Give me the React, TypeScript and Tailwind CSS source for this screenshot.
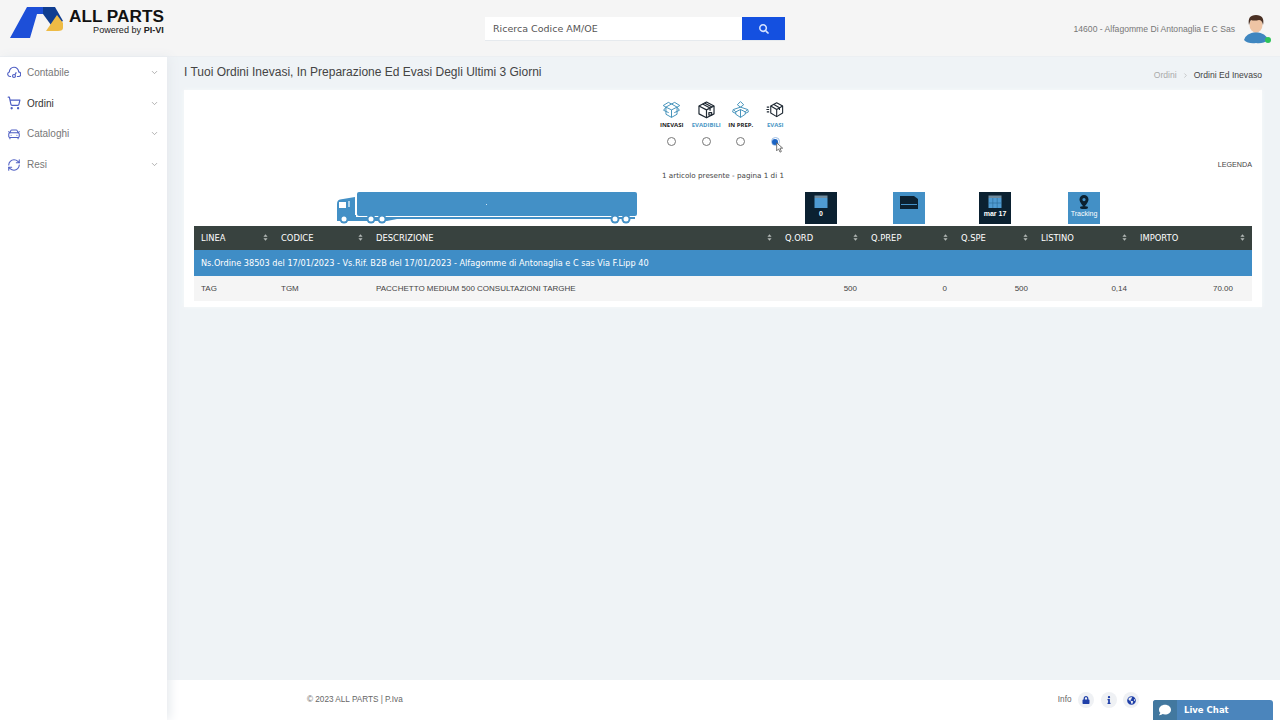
import { ChevronDown, ShoppingCart, CarFront, RefreshCw, ChevronRight } from "lucide-react";
import { FaComment, FaGlobeAmericas, FaInfo, FaLock, FaSearch } from "react-icons/fa";

const sideItems = [
    { label: "Contabile", icon: "gauge" },
    { label: "Ordini", icon: "cart", active: true },
    { label: "Cataloghi", icon: "car" },
    { label: "Resi", icon: "sync" },
];

const columns = [
    { label: "LINEA", width: "w-[81px]", pad: "pl-[7px]" },
    { label: "CODICE", width: "w-[95px]", pad: "pl-[6px]" },
    { label: "DESCRIZIONE", width: "w-[409px]", pad: "pl-[6px]" },
    { label: "Q.ORD", width: "w-[86px]", pad: "pl-[6px]" },
    { label: "Q.PREP", width: "w-[90px]", pad: "pl-[6px]" },
    { label: "Q.SPE", width: "w-[80px]", pad: "pl-[6px]" },
    { label: "LISTINO", width: "w-[99px]", pad: "pl-[6px]" },
    { label: "IMPORTO", width: "w-[118px]", pad: "pl-[6px]" },
];

function SideIcon({ name }: { name: string }) {
    const cls = "w-[14px] h-[14px] text-[#4f5fc4]";
    if (name === "cart") return <ShoppingCart className={cls} strokeWidth={2} />;
    if (name === "car") return <CarFront className={cls} strokeWidth={1.8} />;
    if (name === "sync") return <RefreshCw className={cls} strokeWidth={1.8} />;
    return (
        <svg viewBox="0 0 24 24" className={cls} fill="none" stroke="currentColor" strokeWidth="2">
            <path d="M7 18H5a4 4 0 0 1-1-7.800A8 8 0 0 1 20 10a4 4 0 0 1-1 8h-2" />
            <circle cx="12" cy="17" r="2.500" />
            <path d="M13.500 15 16 11" />
        </svg>
    );
}

function Logo() {
    return (
        <svg viewBox="0 0 54 32" className="w-[54px] h-[32px] shrink-0">
            <path d="M0 32 17 1H36L33 8H27L20 32Z" fill="#1d4fd8" />
            <path d="M33 1H45L53 15 46 19H41L33 8Z" fill="#0f3d91" />
            <path d="M36 25 47 9 53 17V22Q53 25 48 25Z" fill="#eebb45" />
        </svg>
    );
}

function Avatar() {
    return (
        <div className="relative w-[26px] h-[30px]">
            <svg viewBox="0 0 26 30" className="w-[26px] h-[30px]">
                <path d="M1 26 Q3 19 13 18 Q23 19 25 26 Q20 30 13 29 Q5 30 1 26 Z" fill="#3f86c0" />
                <ellipse cx="13" cy="11" rx="6.500" ry="7.500" fill="#eec4a4" />
                <path d="M6 11 Q4 1 13 1 Q22 1 20 11 Q19 6 16 6 Q11 7 8 6 Q7 7 6 11 Z" fill="#4a3023" />
            </svg>
            <span className="absolute right-[-2px] bottom-[1px] w-[6px] h-[6px] rounded-full bg-[#2fc25b]" />
        </div>
    );
}

function OpenBox() {
    return (
        <svg viewBox="0 0 24 24" className="w-[19px] h-[19px]" fill="none" stroke="#3f8fb8" strokeWidth="1.200" strokeLinejoin="round">
            <path d="M5 9 12 5l7 4v9l-7 4-7-4Z" />
            <path d="M5 9l7 3.500L19 9M12 12.500V22" />
            <path d="M5 9 1.500 7 8 3l4 2 4-2 6.500 4L19 9M5 9l-3 4 6.500 3M19 9l3 4-6.500 3" />
        </svg>
    );
}

function CrateBox() {
    return (
        <svg viewBox="0 0 24 24" className="w-[19px] h-[19px]" fill="none" stroke="#1f2933" strokeWidth="1.500" strokeLinejoin="round">
            <path d="M2.500 7.500 12 2.500l9.500 5v10L12 22.500l-9.500-5Z" />
            <path d="M2.500 7.500 12 12.500l9.500-5M12 12.500v10M7 5l9.500 5v3.500M9.500 3.800 19 8.800" />
            <path d="M15 16h3.500v3H15Z" />
        </svg>
    );
}

function PrepBox() {
    return (
        <svg viewBox="0 0 24 24" className="w-[19px] h-[19px]" fill="none" stroke="#3f8fb8" strokeWidth="1.200" strokeLinejoin="round">
            <path d="M12 2 8 6l4 3 4-3Z" />
            <path d="M12 9 3 12l3 3 6-3 6 3 3-3Z" />
            <path d="M6 15v3l6 4 6-4v-3M12 12v10M3 12l-1 3 4 2M21 12l1 3-4 2" />
        </svg>
    );
}

function ShipBox() {
    return (
        <svg viewBox="0 0 24 24" className="w-[19px] h-[19px]" fill="none" stroke="#1f2933" strokeWidth="1.400" strokeLinejoin="round">
            <path d="M6 7.500 13.500 3.500 21 7.500v9l-7.500 4.500L6 16.500Z" />
            <path d="M6 7.500l7.500 4.500L21 7.500M13.500 12v9M9.500 5.500 17 9.700v3" />
            <path d="M1 9h3M0.500 12h3.500M1 15h3" />
        </svg>
    );
}

function Truck() {
    return (
        <svg viewBox="0 0 301 32" className="w-[301px] h-[32px]">
            <rect x="20" y="0" width="280" height="24" rx="2" fill="#4390c6" />
            <rect x="149" y="12" width="1" height="1" fill="#cfe4f3" />
            <path d="M0 29V12Q0 8 3 7.500L18 5V23H19V25H36V29Z" fill="#4390c6" />
            <rect x="2" y="10" width="7" height="6" fill="#fff" />
            <rect x="11" y="9" width="2" height="6" fill="#a9d0ea" />
            <path d="M20 25H298V27H60L50 29H20Z" fill="#4390c6" />
            {[7, 34, 45, 278, 289].map((cx) => (
                <g key={cx}>
                    <circle cx={cx} cy="27" r="4.500" fill="#4390c6" />
                    <circle cx={cx} cy="27" r="2.500" fill="#fff" />
                </g>
            ))}
        </svg>
    );
}

function CalendarGlyph({ grid }: { grid?: boolean }) {
    return (
        <svg viewBox="0 0 16 14" className="w-[16px] h-[14px]">
            <rect x="1.500" y="3" width="13" height="10" fill="#4f9bd2" />
            <rect x="1.500" y="0.500" width="13" height="2.500" fill="#6f8a9c" />
            {grid && <path d="M5.800 3v10M10.200 3v10M1.500 8h13" stroke="#2a6a96" strokeWidth="0.600" />}
        </svg>
    );
}

function StatusBox({ dark, children, caption, bold = true }: { dark?: boolean; children?: React.ReactNode; caption?: string; bold?: boolean }) {
    return (
        <div className={`w-[32px] h-[32px] flex flex-col items-center pt-[3px] ${dark ? "bg-[#0b2131]" : "bg-[#4390c6]"}`}>
            {children}
            {caption && <span className={`text-[7px] leading-[9px] text-white whitespace-nowrap ${bold ? "font-bold" : ""}`}>{caption}</span>}
        </div>
    );
}

function SortIcon() {
    return (
        <svg viewBox="0 0 6 8" className="ml-auto w-[5px] h-[7px]">
            <path d="M3 0 5.500 3H.5ZM3 8 .5 5h5Z" fill="#b4bab8" />
        </svg>
    );
}

export default function App() {
    const steps = [
        { label: "INEVASI", icon: <OpenBox />, color: "text-[#222]" },
        { label: "EVADIBILI", icon: <CrateBox />, color: "text-[#4b97c5]" },
        { label: "IN PREP.", icon: <PrepBox />, color: "text-[#222]" },
        { label: "EVASI", icon: <ShipBox />, color: "text-[#4b97c5]", checked: true },
    ];

    return (
        <div className="relative w-[1280px] h-[720px] overflow-hidden flex flex-col bg-[#eff3f6] font-['Liberation_Sans',Arial,sans-serif] text-[#555]">
            <header className="h-[57px] shrink-0 flex items-center bg-[#f5f5f5] border-b border-[#eceff2]">
                <div className="w-[167px] shrink-0 self-start mt-[6px] flex pl-[10px] gap-[5px]">
                    <Logo />
                    <div className="flex flex-col items-end mt-[1px]">
                        <span className="text-[17.200px] leading-[19px] font-bold text-[#111] whitespace-nowrap">ALL PARTS</span>
                        <span className="text-[9.100px] leading-[11px] mt-[-1px] text-[#222] whitespace-nowrap">Powered by <b>PI-VI</b></span>
                    </div>
                </div>
                <div className="ml-[318px] flex w-[300px] h-[24px] mt-[2px] border-b border-[#e6eaee]">
                    <div className="flex-1 bg-white flex items-center pl-[8px] pt-[2px] text-[9.500px] text-[#555] font-['DejaVu_Sans',sans-serif]">Ricerca Codice AM/OE</div>
                    <div className="w-[43px] bg-[#1450e0] flex items-center justify-center">
                        <FaSearch className="w-[10px] h-[10px] text-[#d5e2ff]" />
                    </div>
                </div>
                <div className="ml-auto mr-[11px] mt-[2px] flex items-center gap-[8px]">
                    <span className="mt-[1px] text-[8.600px] text-[#777]">14600 - Alfagomme Di Antonaglia E C Sas</span>
                    <Avatar />
                </div>
            </header>

            <div className="flex-1 flex min-h-0">
                <aside className="relative z-10 w-[167px] shrink-0 bg-white pt-[0.500px] shadow-[3px_0_10px_#e6eaee]">
                    {sideItems.map((item) => (
                        <div key={item.label} className="h-[30.600px] flex items-center pl-[7px] pr-[8px] gap-[6px]">
                            <SideIcon name={item.icon} />
                            <span className={`text-[10px] ${item.active ? "text-[#333]" : "text-[#777]"}`}>{item.label}</span>
                            <ChevronDown className="ml-auto w-[9px] h-[9px] text-[#999]" />
                        </div>
                    ))}
                </aside>

                <main className="flex-1 flex flex-col min-w-0">
                    <div className="flex-1 pl-[17px] pr-[18px]">
                        <div className="flex h-[33px] items-start">
                            <h1 className="mt-[8px] text-[12px] leading-[15px] text-[#444]">I Tuoi Ordini Inevasi, In Preparazione Ed Evasi Degli Ultimi 3 Giorni</h1>
                            <div className="ml-auto mt-[13px] flex items-center gap-[5px] text-[8.600px] leading-[11px]">
                                <span className="text-[#aaa]">Ordini</span>
                                <ChevronRight className="w-[7px] h-[7px] text-[#aaa]" />
                                <span className="text-[#444]">Ordini Ed Inevaso</span>
                            </div>
                        </div>

                        <section className="relative bg-white h-[217px] px-[10px] shadow-[0_0_4px_#f7f9fa]">
                            <div className="flex justify-center pt-[10px] pl-[1px]">
                                {steps.map((s) => (
                                    <div key={s.label} className="w-[34.500px] flex flex-col items-center">
                                        {s.icon}
                                        <span className={`mt-[2px] text-[6px] leading-[8px] font-bold whitespace-nowrap font-['Open_Sans',sans-serif] ${s.color}`}>{s.label}</span>
                                        <span className={`mt-[8px] w-[9px] h-[9px] rounded-full border flex items-center justify-center ${s.checked ? "border-[#9dbde4]" : "border-[#777]"}`}>
                                            {s.checked && <span className="w-[6px] h-[6px] rounded-full bg-[#1a63c4]" />}
                                        </span>
                                    </div>
                                ))}
                            </div>
                            <svg viewBox="0 0 12 16" className="absolute left-[592px] top-[52px] w-[8px] h-[11px]">
                                <path d="M1 1v12l3-3 2 5 2-1-2-5h4Z" fill="#fff" stroke="#555" strokeWidth="1.200" />
                            </svg>

                            <div className="flex justify-end mt-[14px] text-[7.200px] leading-[10px] text-[#444]">LEGENDA</div>
                            <div className="text-center mt-[1px] text-[7.200px] leading-[10px] text-[#444] font-['DejaVu_Sans',sans-serif]">1 articolo presente - pagina 1 di 1</div>

                            <div className="flex mt-[11px] h-[34px]">
                                <div className="ml-[143px]"><Truck /></div>
                                <div className="ml-[167px]">
                                    <StatusBox dark caption="0"><CalendarGlyph /></StatusBox>
                                </div>
                                <div className="ml-[56px]">
                                    <StatusBox>
                                        <svg viewBox="0 0 18 15" className="w-[18px] h-[15px]">
                                            <path d="M0 1H14L18 4V14H0Z" fill="#0b2131" />
                                            <rect x="1" y="9" width="16" height="1" fill="#4390c6" />
                                        </svg>
                                    </StatusBox>
                                </div>
                                <div className="ml-[54px]">
                                    <StatusBox dark caption="mar 17"><CalendarGlyph grid /></StatusBox>
                                </div>
                                <div className="ml-[57px]">
                                    <StatusBox caption="Tracking" bold={false}>
                                        <svg viewBox="0 0 14 14" className="w-[14px] h-[14px]">
                                            <path fillRule="evenodd" d="M7 0a4.500 4.500 0 0 1 4.500 4.500C11.500 7.500 7 12 7 12S2.500 7.500 2.500 4.500A4.500 4.500 0 0 1 7 0Zm0 3a1.600 1.600 0 1 0 0 3.200A1.600 1.600 0 0 0 7 3Z" fill="#0b2131" />
                                            <ellipse cx="7" cy="12.500" rx="4" ry="1.500" fill="#0b2131" />
                                        </svg>
                                    </StatusBox>
                                </div>
                            </div>

                            <table className="table-fixed w-[1058px] border-collapse">
                                <colgroup>
                                    {columns.map((c) => <col key={c.label} className={c.width} />)}
                                </colgroup>
                                <thead>
                                    <tr className="h-[24px] bg-[#38423f] text-white">
                                        {columns.map((c) => (
                                            <th key={c.label} className={`text-left font-normal p-0 text-[8.400px] font-['DejaVu_Sans',sans-serif] ${c.pad}`}>
                                                <div className="flex items-center pr-[7px]">
                                                    <span>{c.label}</span>
                                                    <SortIcon />
                                                </div>
                                            </th>
                                        ))}
                                    </tr>
                                </thead>
                                <tbody>
                                    <tr className="h-[26px] bg-[#3f8dc6] text-white">
                                        <td colSpan={8} className="p-0 pl-[7px] text-[8.170px] font-['DejaVu_Sans',sans-serif]">
                                            Ns.Ordine 38503 del 17/01/2023 - Vs.Rif. B2B del 17/01/2023 - Alfagomme di Antonaglia e C sas Via F.Lipp 40
                                        </td>
                                    </tr>
                                    <tr className="h-[25px] bg-[#f5f5f5] text-[8px] text-[#444]">
                                        <td className="p-0 pl-[7px]">TAG</td>
                                        <td className="p-0 pl-[6px]">TGM</td>
                                        <td className="p-0 pl-[6px]">PACCHETTO MEDIUM 500 CONSULTAZIONI TARGHE</td>
                                        <td className="p-0 pr-[8px] text-right">500</td>
                                        <td className="p-0 pr-[8px] text-right">0</td>
                                        <td className="p-0 pr-[7px] text-right">500</td>
                                        <td className="p-0 pr-[7px] text-right">0,14</td>
                                        <td className="p-0 pr-[19px] text-right">70.00</td>
                                    </tr>
                                </tbody>
                            </table>
                        </section>
                    </div>

                    <footer className="h-[40px] shrink-0 bg-white flex pt-[13px] pl-[140px] pr-[141px] text-[8.200px] text-[#666]">
                        <span className="leading-[14px]">© 2023 ALL PARTS | P.Iva</span>
                        <div className="ml-auto flex items-center h-[14px] gap-[6.500px]">
                            <span>Info</span>
                            <span className="w-[16px] h-[16px] rounded-full bg-[#eff1f4] flex items-center justify-center"><FaLock className="w-[8px] h-[8px] text-[#1f3fa8]" /></span>
                            <span className="w-[16px] h-[16px] rounded-full bg-[#eff1f4] flex items-center justify-center"><FaInfo className="w-[8px] h-[8px] text-[#1f3fa8]" /></span>
                            <span className="w-[16px] h-[16px] rounded-full bg-[#eff1f4] flex items-center justify-center"><FaGlobeAmericas className="w-[9px] h-[9px] text-[#1f3fa8]" /></span>
                        </div>
                    </footer>
                </main>
            </div>

            <div className="absolute left-[1153px] bottom-0 w-[120px] h-[20px] bg-[#4b85bc] rounded-t-[3px] flex items-center text-white">
                <div className="w-[24px] h-full bg-[#42789f] rounded-tl-[3px] flex items-center justify-center">
                    <FaComment className="w-[12px] h-[12px]" />
                </div>
                <span className="ml-[7px] text-[8.500px] font-bold font-['DejaVu_Sans',sans-serif]">Live Chat</span>
            </div>
        </div>
    );
}
